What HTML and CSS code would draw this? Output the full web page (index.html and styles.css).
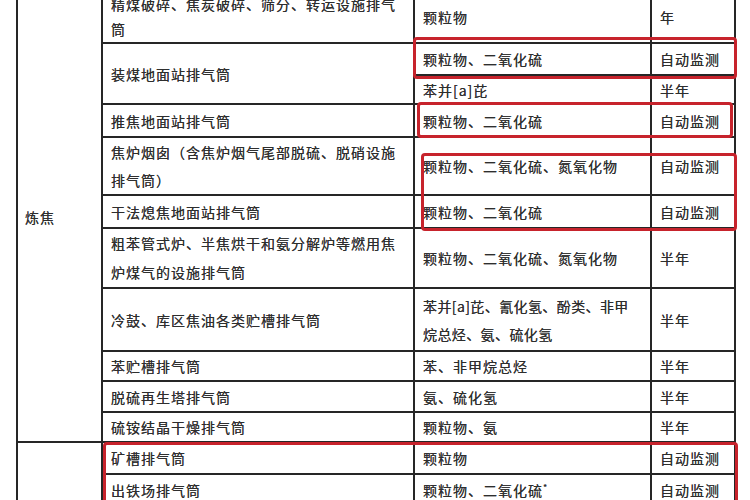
FILE: index.html
```html
<!DOCTYPE html>
<html lang="zh-CN">
<head>
<meta charset="utf-8">
<title>监测要求</title>
<link rel="stylesheet" href="styles.css">
</head>
<body>
<div class="page">
  <table class="grid">
    <colgroup>
      <col class="c-cat">
      <col class="c-src">
      <col class="c-item">
      <col class="c-freq">
    </colgroup>
    <tr class="h52">
      <td class="cat" rowspan="11">炼焦</td>
      <td class="first">精煤破碎、焦炭破碎、筛分、转运设施排气<br>筒</td>
      <td>颗粒物</td>
      <td>年</td>
    </tr>
    <tr class="h32">
      <td rowspan="2">装煤地面站排气筒</td>
      <td>颗粒物、二氧化硫</td>
      <td>自动监测</td>
    </tr>
    <tr class="h29">
      <td>苯并[a]芘</td>
      <td>半年</td>
    </tr>
    <tr class="h33">
      <td>推焦地面站排气筒</td>
      <td>颗粒物、二氧化硫</td>
      <td>自动监测</td>
    </tr>
    <tr class="h58">
      <td class="two">焦炉烟囱（含焦炉烟气尾部脱硫、脱硝设施<br>排气筒）</td>
      <td>颗粒物、二氧化硫、氮氧化物</td>
      <td>自动监测</td>
    </tr>
    <tr class="h33">
      <td>干法熄焦地面站排气筒</td>
      <td>颗粒物、二氧化硫</td>
      <td>自动监测</td>
    </tr>
    <tr class="h60">
      <td class="two wide">粗苯管式炉、半焦烘干和氨分解炉等燃用焦<br>炉煤气的设施排气筒</td>
      <td>颗粒物、二氧化硫、氮氧化物</td>
      <td>半年</td>
    </tr>
    <tr class="h63">
      <td>冷鼓、库区焦油各类贮槽排气筒</td>
      <td class="two tight">苯并[a]芘、氰化氢、酚类、非甲<br>烷总烃、氨、硫化氢</td>
      <td>半年</td>
    </tr>
    <tr class="h30">
      <td>苯贮槽排气筒</td>
      <td>苯、非甲烷总烃</td>
      <td>半年</td>
    </tr>
    <tr class="h31">
      <td>脱硫再生塔排气筒</td>
      <td>氨、硫化氢</td>
      <td>半年</td>
    </tr>
    <tr class="h30">
      <td>硫铵结晶干燥排气筒</td>
      <td>颗粒物、氨</td>
      <td>半年</td>
    </tr>
    <tr class="h32">
      <td class="cat" rowspan="2"></td>
      <td>矿槽排气筒</td>
      <td>颗粒物</td>
      <td>自动监测</td>
    </tr>
    <tr class="h32">
      <td>出铁场排气筒</td>
      <td>颗粒物、二氧化硫<sup>*</sup></td>
      <td>自动监测</td>
    </tr>
  </table>
  <div class="mark m1"></div>
  <div class="mark m2"></div>
  <div class="mark m3"></div>
  <div class="mark m4"></div>
</div>
</body>
</html>
```

FILE: styles.css
```css
html, body {
  margin: 0;
  padding: 0;
  background: #ffffff;
}

.page {
  position: relative;
  width: 750px;
  height: 500px;
  overflow: hidden;
  background: #ffffff;
}

.grid {
  border-collapse: collapse;
  table-layout: fixed;
  width: 718px;
  margin: -10px 0 0 16px;
  font-family: "Noto Sans CJK SC", "Noto Sans", sans-serif;
  font-size: 14px;
  letter-spacing: 1px;
  color: #2e2e2e;
  text-shadow: 0 0 0.5px #555555;
}

.c-cat { width: 85px; }
.c-src { width: 312px; }
.c-item { width: 237px; }
.c-freq { width: 84px; }

.grid td {
  border: 2px solid #262626;
  padding: 0 0 0 8px;
  vertical-align: middle;
  white-space: nowrap;
  line-height: 18px;
  overflow: hidden;
}

.grid td.cat {
  padding-left: 7px;
}

.grid td.first {
  line-height: 25px;
}

.grid td.two {
  line-height: 28px;
}

.grid td.wide {
  line-height: 29px;
}

.grid td.tight {
  line-height: 28px;
  letter-spacing: 0.4px;
}

.grid sup {
  font-size: 9px;
  line-height: 0;
  vertical-align: 5px;
}

.h29 { height: 29px; }
.h30 { height: 30px; }
.h31 { height: 31px; }
.h32 { height: 32px; }
.h33 { height: 33px; }
.h52 { height: 52px; }
.h58 { height: 58px; }
.h60 { height: 60px; }
.h63 { height: 63px; }

.mark {
  position: absolute;
  border: 3px solid #c7232c;
  border-radius: 4px;
  box-sizing: border-box;
}

.m1 { left: 413px; top: 37px; width: 324px; height: 42px; }
.m2 { left: 417px; top: 102px; width: 316px; height: 36px; }
.m3 { left: 421px; top: 153px; width: 316px; height: 78px; }
.m4 { left: 103px; top: 442px; width: 635px; height: 80px; }
```
